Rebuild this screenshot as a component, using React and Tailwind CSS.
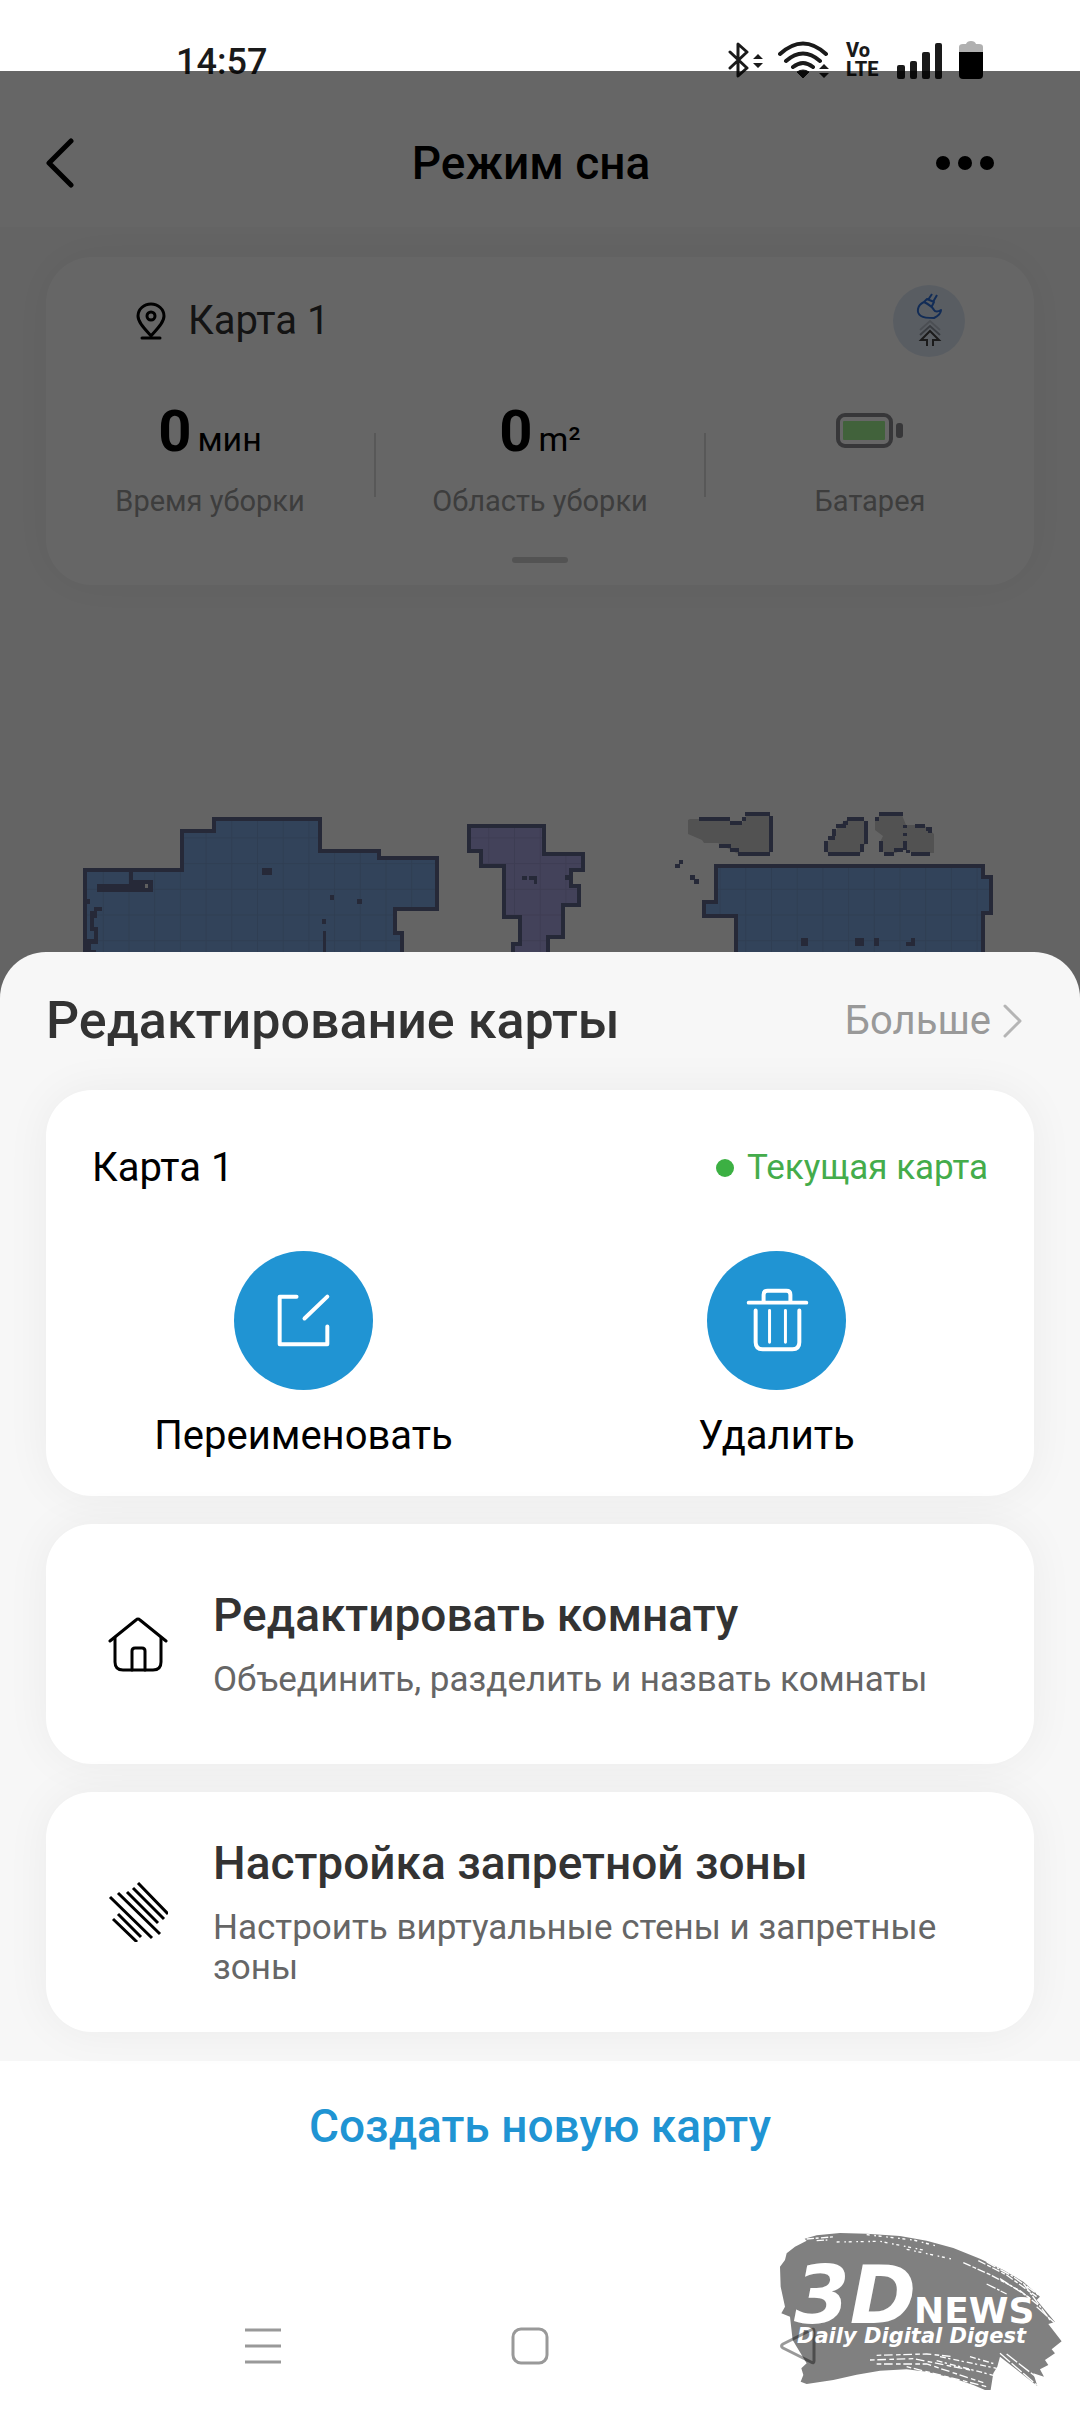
import React, { Fragment, useState } from 'react';

// --- ÍCONOS DE LA BARRA DE ESTADO ---
const BluetoothIcon = () => (
    <svg className="w-[36px] h-[38px]" viewBox="0 0 36 38" fill="none" aria-hidden="true">
        <path d="M2 11L19 27L10 35V3L19 11L2 27" stroke="#1a1a1a" strokeWidth={3} strokeLinecap="round" strokeLinejoin="round" />
        <path d="M30 13L35 18H25ZM30 27L35 22H25Z" fill="#1a1a1a" />
    </svg>
);

const WifiIcon = () => (
    <svg className="w-[52px] h-[38px]" viewBox="0 0 52 38" fill="none" aria-hidden="true">
        <path d="M2 13Q25 -8 48 13M8 20Q25 5 42 20M15 26Q25 18 35 26" stroke="#1a1a1a" strokeWidth={4} strokeLinecap="round" />
        <path d="M19 31Q25 27 31 31L25 37Z" fill="#1a1a1a" stroke="#1a1a1a" />
        <path d="M46 23L51 28H41ZM46 37L51 32H41Z" fill="#1a1a1a" />
    </svg>
);

const SignalIcon = () => (
    <svg className="w-[46px] h-[38px]" viewBox="0 0 46 38" fill="#1a1a1a" aria-hidden="true">
        <rect x="0" y="24" width="8" height="14" rx="2" />
        <rect x="13" y="20" width="7" height="18" rx="2" />
        <rect x="25" y="11" width="8" height="27" rx="2" />
        <rect x="38" y="2" width="7" height="36" rx="2" />
    </svg>
);

const PhoneBatteryIcon = () => (
    <svg className="w-[24px] h-[38px]" viewBox="0 0 24 38" aria-hidden="true">
        <path d="M0 11V6Q0 3 4 3H7Q8 0 12 0T17 3H20Q24 3 24 6V11Z" fill="#b0b0b0" />
        <path d="M0 11H24V34Q24 38 20 38H4Q0 38 0 34Z" fill="#000" />
    </svg>
);

// --- ÍCONOS DE LA APLICACIÓN ---
const PinIcon = () => (
    <svg className="w-[30px] h-[38px]" viewBox="0 0 30 38" fill="none" stroke="#000" strokeWidth={3} aria-hidden="true">
        <path d="M15 34C8 26 2 20 2 14A13 12 0 0 1 28 14C28 20 22 26 15 34Z" strokeLinejoin="round" />
        <circle cx="15" cy="14" r="4" />
        <path d="M6 36H24" strokeLinecap="round" />
    </svg>
);

const CleanModeIcon = () => (
    <svg className="w-[72px] h-[72px]" viewBox="0 0 72 72" fill="none" aria-hidden="true">
        <circle cx="36" cy="36" r="36" fill="#dfe9f6" />
        <path d="M31 17C24 20 23 28 28 31C31 33 37 33 41 33C45 31 48 29 48 25C45 27 42 27 41 25C39 22 39 21 31 17ZM31 17L34 14L41 17L39 21M39 9L35 15M44 10L40 17" stroke="#2f6fd6" strokeWidth={2} strokeLinejoin="round" />
        <path d="M27 45L37 36L47 45" stroke="#bcc4d0" strokeWidth={2} />
        <path d="M27 50L37 41L47 50" stroke="#8f96a2" strokeWidth={2} />
        <path d="M34 61V55H28L37 46L46 55H40V61" stroke="#444" strokeWidth={2} />
    </svg>
);

const RobotBatteryIcon = () => (
    <svg className="w-[68px] h-[36px]" viewBox="0 0 68 36" fill="none" aria-hidden="true">
        <rect x="2" y="2" width="53" height="31" rx="7" stroke="#8a8a8e" strokeWidth={4} />
        <rect x="7" y="8" width="42" height="19" rx="1" fill="#a3f595" />
        <rect x="60" y="10" width="7" height="15" rx="3" fill="#8a8a8e" />
    </svg>
);

const RenameIcon = () => (
    <svg className="w-[139px] h-[139px]" viewBox="0 0 140 140" fill="none" stroke="#fff" strokeWidth={4} strokeLinecap="round" strokeLinejoin="round" aria-hidden="true">
        <path d="M63 46H46V94H94V76M94 46L71 68" />
    </svg>
);

const TrashIcon = () => (
    <svg className="w-[139px] h-[139px]" viewBox="0 0 140 140" fill="none" stroke="#fff" strokeWidth={4} strokeLinecap="round" strokeLinejoin="round" aria-hidden="true">
        <path d="M42 52H100M57 51V44Q57 40 61 40H80Q84 40 84 44V51M49 60V92Q49 99 56 99H86Q93 99 93 92V60" />
        <path d="M63 60V92M79 60V92" strokeWidth={3} />
    </svg>
);

const HomeIcon = () => (
    <svg className="w-[60px] h-[60px]" viewBox="0 0 60 60" fill="none" stroke="#000" strokeWidth={3} strokeLinecap="round" strokeLinejoin="round" aria-hidden="true">
        <path d="M2 27L28 6Q30 4 32 6L58 27" />
        <path d="M7 24V48Q7 56 15 56H45Q53 56 53 48V24" />
        <path d="M24 56V37Q24 34 27 34H34Q37 34 37 37V56" />
    </svg>
);

const ZoneIcon = () => (
    <svg className="w-[60px] h-[60px]" viewBox="0 0 60 60" fill="none" stroke="#000" strokeWidth={3} aria-hidden="true">
        <path d="M30 1L60 32M25 6L56 37M19 10L50 41M10 11L52 52M2 15L44 56M10 32L33 55M5 37L29 60" />
    </svg>
);

// Plano de la vivienda generado por el robot
const FloorMap = () => (
    <svg className="block w-full" viewBox="0 0 1080 220" fill="none" aria-hidden="true">
        <defs>
            <pattern id="grid" width="25.7" height="25.7" y="6" patternUnits="userSpaceOnUse">
                <path d="M0 0H25.7M0 0V25.7" stroke="#5f668c" strokeOpacity="0.2" strokeWidth={2} />
            </pattern>
        </defs>
        {[
            { d: 'M85 220V90H182V51H214V39H320V71H379V78H437V129H395V153H402V220Z', fill: '#7da9e0' },
            { d: 'M513 220V164H520V137H504V86H481V71H469V46H544V74H583V90H571V106H579V125H563V157H548V220Z', fill: '#a9a5e0' },
            { d: 'M736 220V136H704V122H716V86H983V97H991V133H983V220Z', fill: '#7da9e0' },
        ].map((room) => (
            <g key={room.d}>
                <path d={room.d} fill={room.fill} />
                <path d={room.d} fill="url(#grid)" stroke="#5f668c" strokeWidth={4} />
            </g>
        ))}
        {/* zonas sin explorar */}
        <g fill="#cccccc">
            <path d="M688 40V54L702 60L704 63L718 63L738 74H770V36H746L742 43H732L728 39H690Z" />
            <path d="M828 74L825 64L834 56L838 46L848 39H864L866 62L860 74Z" />
            <path d="M875 41L880 35H902L906 45H924L934 54V73H912L905 68L896 73H884L880 62L883 56L875 50Z" />
        </g>
        <path d="M699 39H730M730 43H742M742 39H746M745 34H770M771 36V72M738 74H770M730 70H739M719 66H731" stroke="#5f668c" strokeWidth={4} />
        <path d="M847 39H864M866 41V64M862 64V72M828 74H860M826 72V61M828 58H835M834 56V49M836 46H846M843 43H848" stroke="#5f668c" strokeWidth={4} />
        <path d="M879 34H903M877 37V41M881 61V72M884 74H894M894 70H903M905 61V70M905 45V48M905 53V56M908 70V73M911 74H930M915 46H925M926 49H930V53" stroke="#5f668c" strokeWidth={4} />
        {/* obstáculos */}
        <g fill="#5f668c">
            <path d="M97 104H129V92H133V100H153V112H97Z" />
            <path d="M262 88H272V95H262ZM330 115H334V120H330ZM357 119H362V124H357ZM322 139H326V144H322ZM323 151H326V220H323Z" />
            <path d="M87 119H90V124H87ZM94 127H102V131H97V138H94V147H98V164H91V170H96V175H86V159H94V151H90V131H94Z" />
            <path d="M522 96H527V100H522ZM529 96H537V104H534V100H529ZM565 95H571V100H565Z" />
            <path d="M675 84H679V80H683V84H680V88H675ZM690 95H695V99H699V104H694V100H690Z" />
            <path d="M801 158H808V166H801ZM855 158H864V166H855ZM874 158H879V166H874ZM911 158H915V166H906V162H911Z" />
        </g>
        <rect x="145" y="104" width="3" height="4" fill="#eee" />
    </svg>
);

// Marca de agua con trazo de pincel
const Watermark = () => (
    <svg className="w-[340px] h-[212px]" viewBox="0 0 340 212" role="img" aria-label="3DNews Daily Digital Digest">
        <g transform="scale(0.3333)">
            <path
                d="M194 116L230 106L300 99L380 101L480 108L560 122L640 144L720 176L790 210L850 245L900 290L890 300L945 366L925 372L965 424L935 448L945 460L915 480L925 495L900 508L912 530L880 520L892 558L850 525L780 470L772 500L760 520L752 570L735 570L700 555L640 535L560 515L500 508L420 512L350 524L280 540L200 552L182 545L190 525L184 505L200 490L170 440L158 420L150 350L124 340L135 320L122 260L120 200L135 180L140 160L165 140L200 122Z"
                fill="#808080"
            />
            <g stroke="#fff" strokeWidth={4} fill="none">
                <path d="M200 117L285 110M230 122L262 120" strokeDasharray="22 5 9 7" />
                <path d="M290 126L420 124L560 152M380 104L520 120L590 138M500 148L640 178" strokeDasharray="9 14 5 8" />
                <path d="M670 188L750 224L840 272L900 320M715 182L800 225L890 290" strokeDasharray="24 6 12 5" />
                <path d="M740 186L820 230L895 284M780 236L870 294M850 250L930 360M740 252L800 282" strokeDasharray="30 5 8 4" />
                <path d="M890 320L945 370M780 460L890 555M800 462L900 540" strokeDasharray="40 6" />
                <path d="M410 466L560 462L640 470M390 480L520 476L700 512M410 492L560 492L730 548M500 500L740 560" strokeDasharray="14 8 26 10" />
                <path d="M600 470L770 505M590 482L760 526M690 470L765 492" strokeDasharray="18 7 7 9" />
            </g>
        </g>
        <g fill="#fff" fontFamily="'DejaVu Sans', sans-serif" fontWeight="bold">
            <text x="54" y="123" fontSize="80" fontStyle="italic">3D</text>
            <text x="174" y="123" fontSize="36">NEWS</text>
            <text x="57" y="143" fontSize="21" fontStyle="italic">Daily Digital Digest</text>
        </g>
    </svg>
);

const stats = [
    { value: '0', unit: 'мин', label: 'Время уборки' },
    { value: '0', unit: 'm²', label: 'Область уборки' },
    { label: 'Батарея' },
];

const actions = [
    { label: 'Переименовать', icon: RenameIcon },
    { label: 'Удалить', icon: TrashIcon },
];

const options = [
    { title: 'Редактировать комнату', text: 'Объединить, разделить и назвать комнаты', icon: HomeIcon },
    { title: 'Настройка запретной зоны', text: 'Настроить виртуальные стены и запретные зоны', icon: ZoneIcon },
];

const card = 'bg-white rounded-[46px] shadow-[0_0_46px_rgba(0,0,0,0.05)]';

export default function App() {
    const [selected, setSelected] = useState(null);

    return (
        <div className="relative bg-white text-black font-['Roboto',sans-serif]">
            {/* Pantalla de fondo, oscurecida */}
            <div className="relative bg-[#fafafa]">
                <div className="bg-white">
                    <div className="flex items-start justify-between h-[90px] pt-[41px] pl-[176px] pr-[97px]">
                        <span className="text-[36px] leading-[42px] font-medium text-[#1a1a1a]">14:57</span>
                        <div className="flex items-center">
                            <BluetoothIcon />
                            <span className="ml-[14px]"><WifiIcon /></span>
                            <span className="ml-[16px] w-[32px] text-[20px] leading-[19px] font-extrabold text-[#1a1a1a]">Vo<br />LTE</span>
                            <span className="ml-[19px]"><SignalIcon /></span>
                            <span className="ml-[16px]"><PhoneBatteryIcon /></span>
                        </div>
                    </div>
                    <header className="grid grid-cols-[1fr_auto_1fr] items-center h-[137px] pt-[8px] pl-[46px] pr-[64px]">
                        <button type="button" aria-label="Назад" className="justify-self-start">
                            <svg className="w-[28px] h-[50px]" viewBox="0 0 28 50" fill="none" stroke="#000" strokeWidth={5} strokeLinecap="round" strokeLinejoin="round">
                                <path d="M25 3L3 25L25 47" />
                            </svg>
                        </button>
                        <h1 className="text-[46px] leading-[54px] font-medium">Режим сна</h1>
                        <button type="button" aria-label="Меню" className="justify-self-end mr-[22px]">
                            <svg className="w-[58px] h-[14px]" viewBox="0 0 58 14">
                                <circle cx="7" cy="7" r="7" />
                                <circle cx="29" cy="7" r="7" />
                                <circle cx="51" cy="7" r="7" />
                            </svg>
                        </button>
                    </header>
                </div>

                <div className="px-[46px] pt-[30px]">
                    <section className={`${card} h-[328px] flex flex-col items-center pt-[28px] pb-[22px]`}>
                        <div className="self-stretch flex items-center pl-[90px] pr-[69px]">
                            <PinIcon />
                            <span className="ml-[22px] flex-1 text-[40px] leading-[48px] text-[#333]">Карта 1</span>
                            <button type="button" aria-label="Режим"><CleanModeIcon /></button>
                        </div>
                        <div className="self-stretch flex-1 grid grid-cols-[1fr_2px_1fr_2px_1fr] pt-[38px]">
                            {stats.map((item, index) => (
                                <Fragment key={item.label}>
                                    {index > 0 && <span className="mt-[38px] h-[64px] bg-[#dcdcdc]" />}
                                    <div className="flex flex-col items-center">
                                        <div className="h-[72px] flex items-baseline gap-[6px]">
                                            {item.value ? (
                                                <>
                                                    <span className="text-[58px] leading-[72px] font-bold">{item.value}</span>
                                                    <span className="text-[34px] leading-[40px]">{item.unit}</span>
                                                </>
                                            ) : (
                                                <span className="self-center"><RobotBatteryIcon /></span>
                                            )}
                                        </div>
                                        <span className="mt-[16px] text-[29px] leading-[36px] text-[#999]">{item.label}</span>
                                    </div>
                                </Fragment>
                            ))}
                        </div>
                        <span className="w-[56px] h-[6px] rounded-full bg-[#d0d0d0]" />
                    </section>
                </div>

                <div className="pt-[195px]">
                    <FloorMap />
                </div>

                <div className="absolute inset-x-0 bottom-0 top-[71px] bg-black/60" />
            </div>

            {/* Panel de edición del mapa */}
            <section className="relative -mt-[48px] rounded-t-[46px] bg-[#f7f7f7] px-[46px] pb-[29px]">
                <div className="flex items-center justify-between h-[138px] pr-[11px]">
                    <h2 className="text-[52px] leading-[60px] font-medium text-[#333]">Редактирование карты</h2>
                    <button type="button" className="flex items-center gap-[12px] text-[40px] leading-[48px] text-[#999]">
                        Больше
                        <svg className="w-[20px] h-[34px]" viewBox="0 0 20 34" fill="none" stroke="#b5b5b5" strokeWidth={3} strokeLinecap="round" strokeLinejoin="round">
                            <path d="M2 2L17 17L2 32" />
                        </svg>
                    </button>
                </div>

                <div className="flex flex-col gap-[28px]">
                    <div className={`${card} pt-[54px] pb-[36px]`}>
                        <div className="flex items-center justify-between px-[46px]">
                            <span className="text-[40px] leading-[48px]">Карта 1</span>
                            <span className="flex items-center gap-[13px] text-[35px] leading-[40px] text-[#44ac4b]">
                                <span className="w-[18px] h-[18px] rounded-full bg-[#3cb043]" />
                                Текущая карта
                            </span>
                        </div>
                        <div className="mt-[59px] grid grid-cols-2 px-[21px]">
                            {actions.map((action) => (
                                <button
                                    key={action.label}
                                    type="button"
                                    onClick={() => setSelected(action.label)}
                                    className="flex flex-col items-center gap-[22px] text-[40px] leading-[48px]"
                                >
                                    <span className="rounded-full bg-[#2094d3]"><action.icon /></span>
                                    {action.label}
                                </button>
                            ))}
                        </div>
                    </div>

                    {options.map((option) => (
                        <button
                            key={option.title}
                            type="button"
                            aria-pressed={selected === option.title}
                            onClick={() => setSelected(option.title)}
                            className={`${card} min-h-[240px] flex items-center gap-[45px] pl-[62px] pr-[60px] text-left`}
                        >
                            <span className="shrink-0"><option.icon /></span>
                            <span className="flex flex-col gap-[18px]">
                                <span className="text-[46px] leading-[54px] font-medium text-[#333]">{option.title}</span>
                                <span className="text-[35px] leading-[40px] text-[#666]">{option.text}</span>
                            </span>
                        </button>
                    ))}
                </div>
            </section>

            <div className="flex justify-center pt-[38px]">
                <button type="button" className="text-[46px] leading-[54px] font-medium text-[#2094d3]">Создать новую карту</button>
            </div>

            {/* Navegación del sistema */}
            <nav className="grid grid-cols-3 justify-items-center pt-[174px] pb-[47px] pl-[130px] pr-[150px]">
                <button type="button" aria-label="Недавние" className="relative z-10">
                    <svg className="w-[38px] h-[38px]" viewBox="0 0 38 38" stroke="#999" strokeWidth={3}>
                        <path d="M1 3H37M1 19H37M1 35H37" />
                    </svg>
                </button>
                <button type="button" aria-label="Домой" className="relative z-10">
                    <svg className="w-[38px] h-[38px]" viewBox="0 0 38 38" fill="none" stroke="#999" strokeWidth={3}>
                        <rect x="2" y="2" width="34" height="34" rx="8" />
                    </svg>
                </button>
                <button type="button" aria-label="Назад" className="relative z-10">
                    <svg className="w-[38px] h-[38px]" viewBox="0 0 38 38" fill="none" stroke="#000" strokeOpacity="0.4" strokeWidth={3} strokeLinejoin="round">
                        <path d="M33 3Q36 1 36 4V34Q36 37 33 35L5 21Q2 19 5 17Z" />
                    </svg>
                </button>
            </nav>

            <div className="absolute right-0 bottom-0 pointer-events-none">
                <Watermark />
            </div>
        </div>
    );
}
